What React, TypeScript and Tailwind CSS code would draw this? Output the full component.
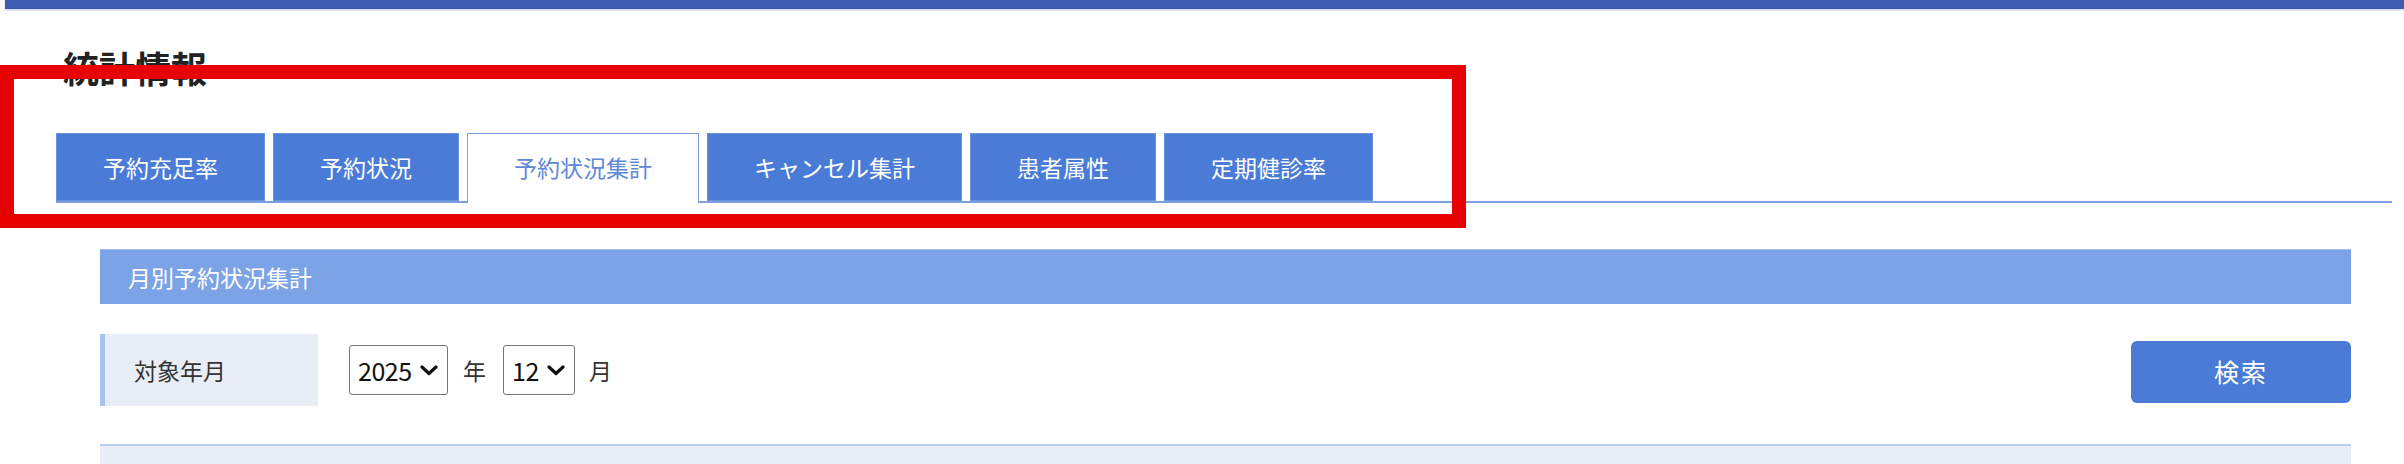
const tabs = ['予約充足率', '予約状況', '予約状況集計', 'キャンセル集計', '患者属性', '定期健診率'];
const activeTab = 2;

function Chevron() {
  return (
    <svg width="18" height="11" viewBox="0 0 18 11" className="shrink-0">
      <path d="M2 2 L9 8.5 L16 2" fill="none" stroke="#111" strokeWidth="3.2" strokeLinecap="round" strokeLinejoin="round" />
    </svg>
  );
}

function FakeSelect({ value, width }: { value: string; width: string }) {
  return (
    <div
      className={`${width} h-[50px] border border-[#767676] rounded-[3px] bg-white flex items-center justify-between pl-[8px] pr-[9px] text-[25px] text-[#111]`}
    >
      <span className="leading-none tracking-[-0.5px]">{value}</span>
      <Chevron />
    </div>
  );
}

export default function App() {
  return (
    <div
      className="relative w-[2404px] h-[464px] overflow-hidden bg-white"
      style={{ fontFamily: '"Noto Sans CJK JP", "Noto Sans", sans-serif' }}
    >
      <div className="h-[9px] ml-[5px] bg-[#3d5cb2] shadow-[0_1px_2px_rgba(60,90,170,0.35)]" />

      <div className="pl-[56px] pr-[12px]">
        <h1 className="pl-[7px] mt-[40px] h-[36px] text-[36px] leading-[36px] font-bold text-[#222]">統計情報</h1>

        <div className="mt-[48px] flex gap-[8px] border-b-[2px] border-[#7d9ee0]">
          {tabs.map((t, i) =>
            i === activeTab ? (
              <div
                key={t}
                className="relative -mb-[2px] h-[70px] pl-[46px] pr-[46px] flex items-center pb-[2px] bg-white border border-b-0 border-[#7d9ee0] text-[23px] text-[#5f88d8]"
              >
                {t}
              </div>
            ) : (
              <div
                key={t}
                className="h-[68px] pl-[46px] pr-[46px] flex items-center bg-[#4a7bd7] border border-[#6a92de] text-[23px] text-white"
              >
                {t}
              </div>
            )
          )}
        </div>

        <div className="ml-[44px] mr-[41px] mt-[46px]">
          <div className="h-[55px] flex items-center pl-[28px] bg-[#7ba3e6] border-t border-[#9dbbef] text-[23px] text-white">
            月別予約状況集計
          </div>

          <div className="mt-[30px] flex items-center">
            <div className="w-[218px] h-[72px] flex items-center pl-[29px] bg-[#e9eef6] border-l-[5px] border-[#a9c3ef] text-[23px] text-[#333]">
              対象年月
            </div>
            <div className="ml-[31px] flex items-center text-[23px] text-[#333]">
              <FakeSelect value="2025" width="w-[99px]" />
              <span className="ml-[15px] mr-[17px]">年</span>
              <FakeSelect value="12" width="w-[72px]" />
              <span className="ml-[14px]">月</span>
            </div>
            <div className="ml-auto w-[220px] h-[62px] flex items-center justify-center rounded-[6px] bg-[#4a7bd6] text-[25px] text-white tracking-[2px] mt-[3px]">
              検索
            </div>
          </div>

          <div className="mt-[38px] h-[30px] border-t-[2px] border-[#b9cdf0] bg-[#e9eef6]" />
        </div>
      </div>

      <div className="absolute left-0 top-[65px] w-[1466px] h-[163px] border-[14px] border-[#e60000]" />
    </div>
  );
}
